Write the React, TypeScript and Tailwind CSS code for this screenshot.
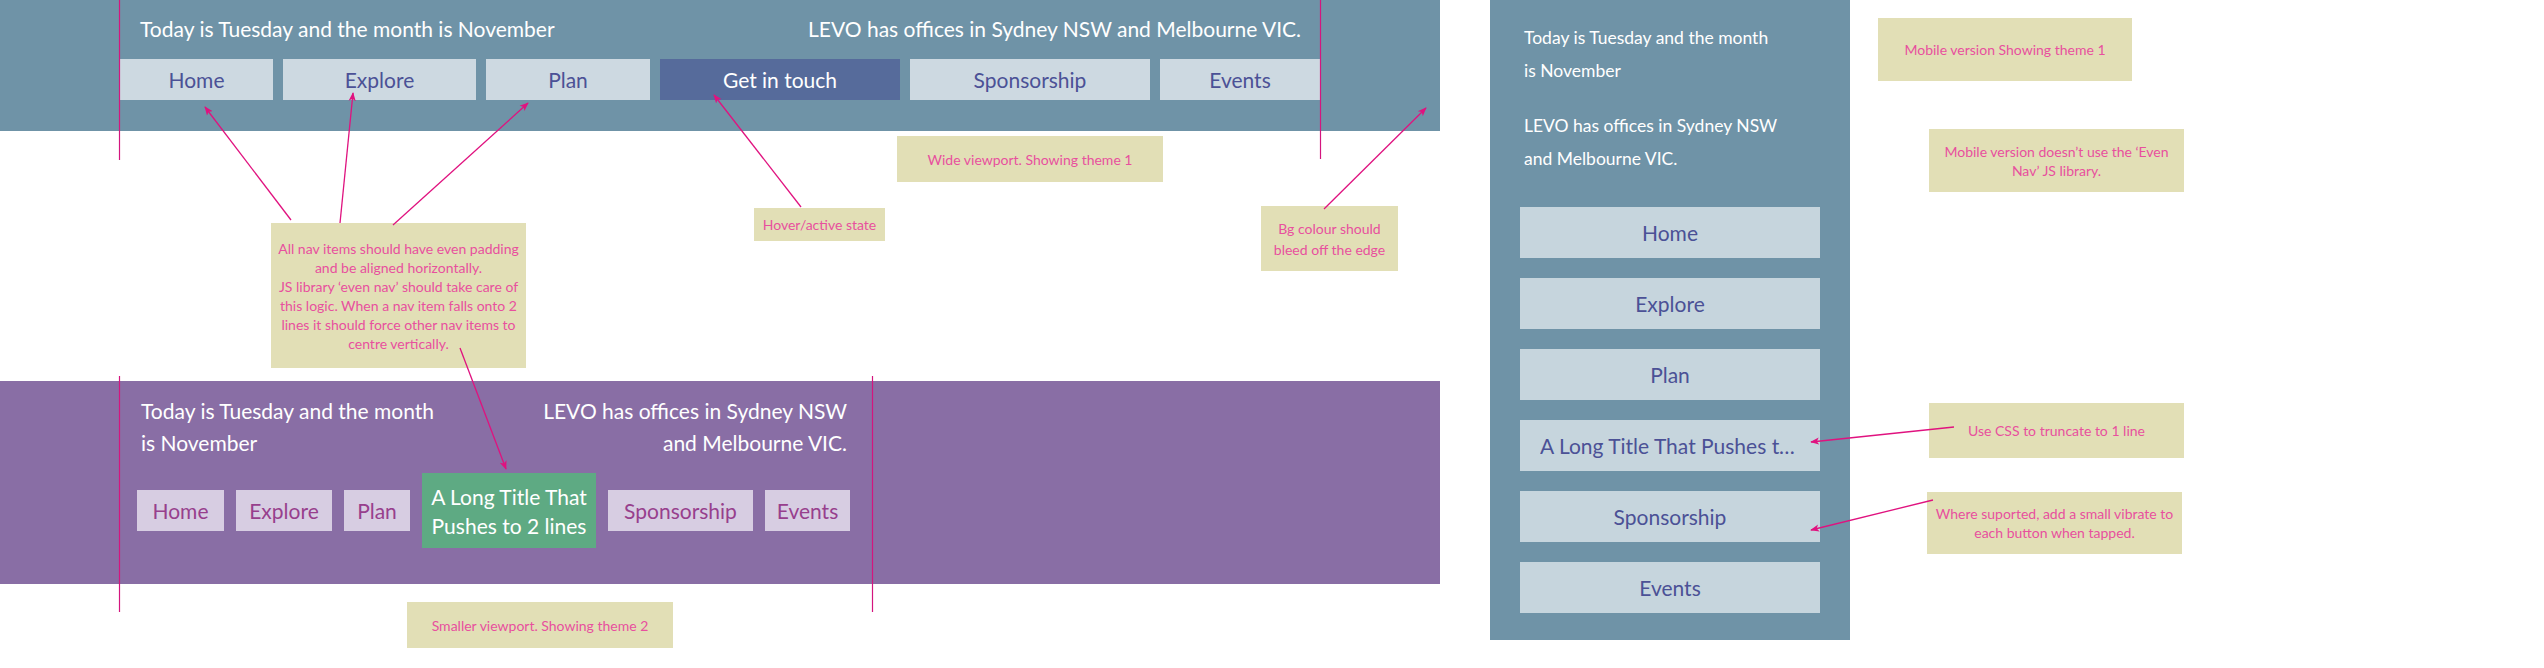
import type { ReactNode } from 'react'

type NavItem = {
  label: string
  width: string
  active?: boolean
}

const wideNav: NavItem[] = [
  { label: 'Home', width: 'w-[153px]' },
  { label: 'Explore', width: 'w-[193px]' },
  { label: 'Plan', width: 'w-[164px]' },
  { label: 'Get in touch', width: 'w-[240px]', active: true },
  { label: 'Sponsorship', width: 'w-[240px]' },
  { label: 'Events', width: 'w-[160px]' },
]

const smallNav: NavItem[] = [
  { label: 'Home', width: 'w-[87px]' },
  { label: 'Explore', width: 'w-[96px]' },
  { label: 'Plan', width: 'w-[66px]' },
  { label: 'A Long Title That Pushes to 2 lines', width: 'w-[174px]', active: true },
  { label: 'Sponsorship', width: 'w-[145px]' },
  { label: 'Events', width: 'w-[85px]' },
]

const mobileNav = ['Home', 'Explore', 'Plan', 'A Long Title That Pushes to 2 lines', 'Sponsorship', 'Events']

// annotation arrows, tail -> head, in page pixels
const arrows = [
  [291, 220, 205, 107],
  [340, 223, 353, 93],
  [393, 225, 528, 103],
  [801, 207, 714, 95],
  [1324, 209, 1426, 108],
  [460, 348, 506, 469],
  [1954, 427, 1811, 442],
  [1933, 500, 1811, 530],
]

const guides = [
  [119.5, 0, 160],
  [1320.5, 0, 159],
  [119.5, 376, 612],
  [872.5, 376, 612],
]

function Note({ className, children }: { className: string; children: ReactNode }) {
  return (
    <div
      className={`absolute flex items-center justify-center bg-[#e2dfb6] text-center text-[14px] whitespace-nowrap text-[#e8509e] ${className}`}
    >
      <p>{children}</p>
    </div>
  )
}

export default function App() {
  return (
    <div className="relative h-[668px] w-[2544px] overflow-hidden bg-white font-[Lato,sans-serif]">
      <div className="flex items-start">
        <div className="w-[1440px] shrink-0">
          {/* wide viewport, theme 1 */}
          <header className="h-[131px] bg-[#6f93a7]">
            <div className="ml-[120px] w-[1200px] pt-[16px]">
              <div className="flex justify-between pl-[20px] pr-[19px] text-[21px] leading-[26px] whitespace-nowrap text-white">
                <p>Today is Tuesday and the month is November</p>
                <p>LEVO has offices in Sydney NSW and Melbourne VIC.</p>
              </div>
              <nav className="mt-[17px] flex gap-[10px]">
                {wideNav.map((item) => (
                  <a
                    key={item.label}
                    className={`flex h-[41px] items-center justify-center text-[21px] leading-[26px] ${item.width} ${
                      item.active ? 'bg-[#566b9b] text-white' : 'bg-[#cdd9e1] text-[#4b5196]'
                    }`}
                  >
                    {item.label}
                  </a>
                ))}
              </nav>
            </div>
          </header>

          <div className="h-[250px]" />

          {/* smaller viewport, theme 2 */}
          <header className="h-[203px] bg-[#896ea5]">
            <div className="ml-[120px] w-[752px] pt-[14px]">
              <div className="flex justify-between pl-[21px] pr-[25px] text-[21px] leading-[32px] text-white">
                <p className="w-[302px]">Today is Tuesday and the month is November</p>
                <p className="w-[314px] text-right">LEVO has offices in Sydney NSW and Melbourne VIC.</p>
              </div>
              <nav className="mt-[14px] flex items-center gap-[12px] pl-[17px]">
                {smallNav.map((item) =>
                  item.active ? (
                    <a
                      key={item.label}
                      className={`flex h-[75px] items-center justify-center bg-[#5eaa83] px-[4px] text-center text-[21px] leading-[29px] text-white ${item.width}`}
                    >
                      {item.label}
                    </a>
                  ) : (
                    <a
                      key={item.label}
                      className={`flex h-[41px] items-center justify-center bg-[#d7cde2] text-[21px] leading-[26px] text-[#973f8d] ${item.width}`}
                    >
                      {item.label}
                    </a>
                  ),
                )}
              </nav>
            </div>
          </header>
        </div>

        {/* mobile, theme 1 */}
        <aside className="ml-[50px] h-[640px] w-[360px] shrink-0 bg-[#6f93a7] pt-[21px]">
          <div className="pl-[34px] text-[17.5px] leading-[33px] text-white">
            <p className="w-[258px]">Today is Tuesday and the month is November</p>
            <p className="mt-[22px] w-[258px]">LEVO has offices in Sydney NSW and Melbourne VIC.</p>
          </div>
          <nav className="mt-[32px] flex flex-col gap-[20px] pl-[30px]">
            {mobileNav.map((label) => (
              <a
                key={label}
                className="flex h-[51px] w-[300px] items-center justify-center bg-[#c6d5dd] px-[20px] text-[21px] leading-[26px] text-[#4b5196]"
              >
                <span className="truncate">{label}</span>
              </a>
            ))}
          </nav>
        </aside>
      </div>

      <Note className="left-[897px] top-[136px] h-[46px] w-[266px] leading-[19px]">
        Wide viewport. Showing theme 1
      </Note>
      <Note className="left-[754px] top-[208px] h-[33px] w-[131px] leading-[19px]">Hover/active state</Note>
      <Note className="left-[1261px] top-[206px] h-[65px] w-[137px] leading-[21px]">
        Bg colour should
        <br />
        bleed off the edge
      </Note>
      <Note className="left-[271px] top-[223px] h-[145px] w-[255px] leading-[19px]">
        All nav items should have even padding
        <br />
        and be aligned horizontally.
        <br />
        JS library ‘even nav’ should take care of
        <br />
        this logic. When a nav item falls onto 2
        <br />
        lines it should force other nav items to
        <br />
        centre vertically.
      </Note>
      <Note className="left-[407px] top-[602px] h-[46px] w-[266px] leading-[19px]">
        Smaller viewport. Showing theme 2
      </Note>
      <Note className="left-[1878px] top-[18px] h-[63px] w-[254px] leading-[19px]">
        Mobile version Showing theme 1
      </Note>
      <Note className="left-[1929px] top-[129px] h-[63px] w-[255px] leading-[19px]">
        Mobile version doesn’t use the ‘Even
        <br />
        Nav’ JS library.
      </Note>
      <Note className="left-[1929px] top-[403px] h-[55px] w-[255px] leading-[19px]">
        Use CSS to truncate to 1 line
      </Note>
      <Note className="left-[1927px] top-[492px] h-[62px] w-[255px] leading-[19px]">
        Where suported, add a small vibrate to
        <br />
        each button when tapped.
      </Note>

      <svg className="pointer-events-none absolute left-0 top-0" width={2544} height={668}>
        <defs>
          <marker
            id="head"
            viewBox="0 0 10 10"
            refX="9"
            refY="5"
            markerWidth="9"
            markerHeight="9"
            markerUnits="userSpaceOnUse"
            orient="auto"
          >
            <path d="M0 1 L10 5 L0 9 L2.5 5 Z" fill="#e0127f" />
          </marker>
        </defs>
        {guides.map(([x, y1, y2], i) => (
          <line key={`g${i}`} x1={x} y1={y1} x2={x} y2={y2} stroke="#d4157f" strokeWidth={1.2} />
        ))}
        {arrows.map(([x1, y1, x2, y2], i) => (
          <line
            key={`a${i}`}
            x1={x1}
            y1={y1}
            x2={x2}
            y2={y2}
            stroke="#e0127f"
            strokeWidth={1.3}
            markerEnd="url(#head)"
          />
        ))}
      </svg>
    </div>
  )
}
